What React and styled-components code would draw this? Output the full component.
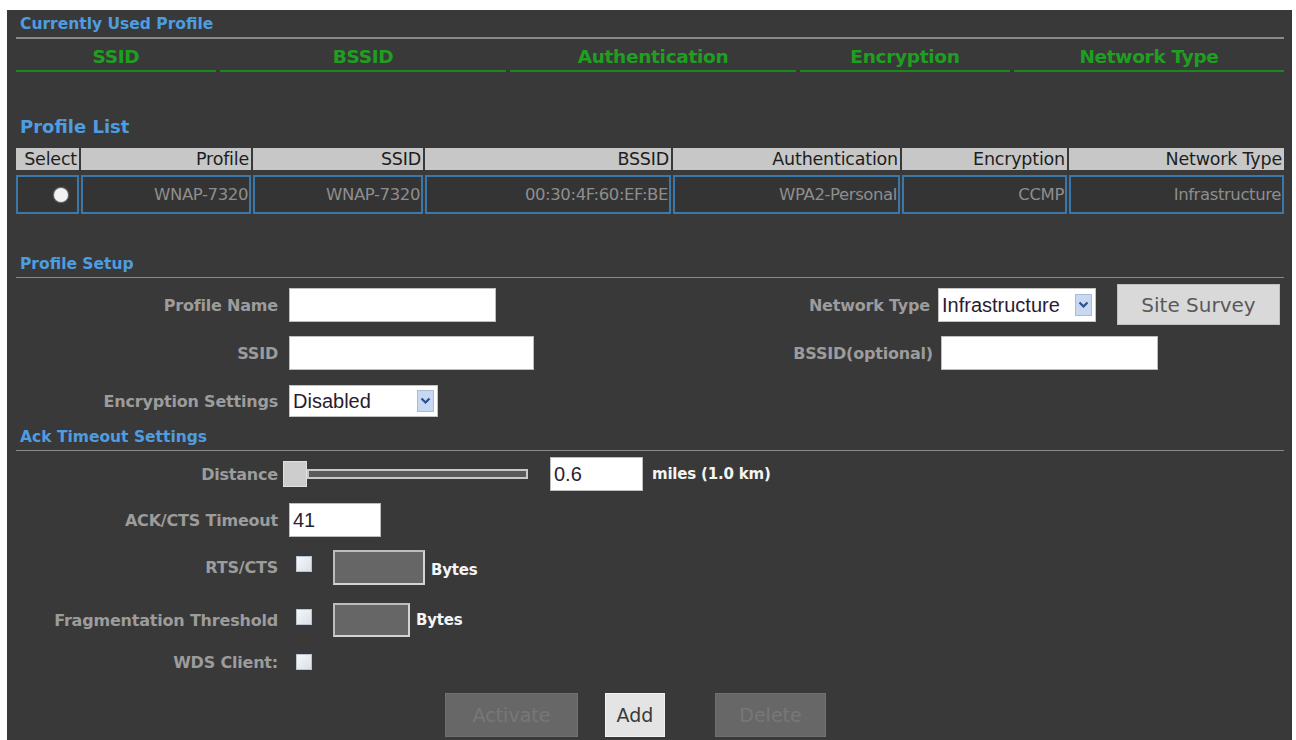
import React from "react";
import styled, { createGlobalStyle } from "styled-components";

const GlobalStyle = createGlobalStyle`
  html, body {
    margin: 0;
    padding: 0;
    background: #ffffff;
    overflow: hidden;
  }
`;

const Panel = styled.div`
  margin: 10px 4px 0 7px;
  min-height: 740px;
  padding: 0 8px 0 9px;
  background: #393939;
  font-family: "DejaVu Sans", sans-serif;
`;

const SectionTitle = styled.div`
  margin-top: ${(p) => p.$top || 0}px;
  padding: ${(p) => p.$padTop || 0}px 0 ${(p) => (p.$line ? 3 : 0)}px 4px;
  font-size: ${(p) => p.$size || 15.5}px;
  line-height: ${(p) => p.$lh || 20}px;
  font-weight: bold;
  color: #4d9de0;
  border-bottom: ${(p) => (p.$line ? `${p.$line}px solid #8a8a8a` : "none")};
`;

const CurrentGrid = styled.div`
  display: grid;
  grid-template-columns: 200px 286px 286px 210px 270px;
  column-gap: 4px;
`;

const CurrentHead = styled.div`
  padding: 6px 0 1px;
  line-height: 24px;
  font-size: 18.5px;
  font-weight: bold;
  text-align: center;
  color: #1f9f22;
  border-bottom: 2px solid #1c861f;
  letter-spacing: -0.3px;
`;

const ListTable = styled.div`
  margin-top: 10px;
  display: grid;
  grid-template-columns: 63px 170px 170px 246px 227px 165px 215px;
  grid-template-rows: 22px 39px;
  column-gap: 2px;
  row-gap: 5px;
`;

const HeadCell = styled.div`
  background: #c7c7c7;
  color: #1e1e1e;
  font-size: 17.5px;
  line-height: 22px;
  text-align: right;
  padding-right: 2px;
  white-space: nowrap;
  overflow: hidden;
  letter-spacing: -0.2px;
`;

const DataCell = styled.div`
  display: flex;
  align-items: center;
  justify-content: ${(p) => (p.$center ? "center" : "flex-end")};
  border: 2px solid #3b78a9;
  background: #343434;
  color: #8e8e8e;
  font-size: 16.5px;
  padding-right: ${(p) => (p.$center ? 0 : 1)}px;
  white-space: nowrap;
  overflow: hidden;
  letter-spacing: -0.4px;
`;

const Radio = styled.span`
  width: 14px;
  height: 14px;
  margin-left: 26px;
  border-radius: 50%;
  background: #f2f2f2;
  box-shadow: 0 0 1px 1px rgba(255, 255, 255, 0.3);
`;

const SetupArea = styled.div`
  margin-top: 10px;
  display: flex;
`;

const FormGrid = styled.div`
  display: grid;
  grid-template-columns: ${(p) => p.$label}px auto;
  grid-auto-rows: 34px;
  justify-content: start;
  row-gap: 14px;
  column-gap: ${(p) => p.$gap || 11}px;
  align-items: center;
  justify-items: start;
  width: ${(p) => p.$width}px;
`;

const FieldGroup = styled.div`
  display: flex;
  align-items: center;
`;

const Label = styled.label`
  justify-self: end;
  font-size: 16px;
  font-weight: bold;
  color: #9c9c9c;
  white-space: nowrap;
  letter-spacing: -0.2px;
  margin-right: ${(p) => p.$shift || 0}px;
`;

const TextInput = styled.div`
  box-sizing: border-box;
  width: ${(p) => p.$w}px;
  height: 34px;
  background: #ffffff;
  border: 1px solid #bdbdbd;
  font-family: "Liberation Sans", Arial, sans-serif;
  font-size: 20px;
  line-height: 32px;
  padding-left: 3px;
  color: #2a2230;
  margin-left: ${(p) => p.$shift || 0}px;
`;

const SelectBox = styled.div`
  box-sizing: border-box;
  width: ${(p) => p.$w}px;
  height: ${(p) => p.$h || 34}px;
  display: flex;
  align-items: center;
  justify-content: space-between;
  background: #ffffff;
  border: 1px solid #c4c4c4;
  padding: 0 3px 0 3px;
  font-family: "Liberation Sans", Arial, sans-serif;
  font-size: 20px;
  color: #2c1a33;
`;

const DropButton = styled.span`
  width: 17px;
  height: 22px;
  display: flex;
  align-items: center;
  justify-content: center;
  background: #c9d8f1;
  border: 1px solid #a9bcdc;
  box-sizing: border-box;
`;

const SurveyButton = styled.div`
  margin: -4px 0 -3px 21px;
  width: 163px;
  height: 41px;
  display: flex;
  align-items: center;
  justify-content: center;
  background: #d9d9d9;
  border: 1px solid #c0c0c0;
  box-sizing: border-box;
  font-size: 20px;
  color: #5a5a5a;
`;

const AckRow = styled.div`
  margin-top: ${(p) => p.$top}px;
  height: ${(p) => p.$h || 34}px;
  display: flex;
  align-items: center;
`;

const AckLabel = styled(Label)`
  width: 262px;
  text-align: right;
  margin-right: ${(p) => p.$gap ?? 11}px;
`;

const Slider = styled.div`
  display: flex;
  align-items: center;
  width: 245px;
`;

const Thumb = styled.span`
  width: 24px;
  height: 26px;
  background: #cdcdcd;
  border: 1px solid #e0e0e0;
  box-sizing: border-box;
`;

const Track = styled.span`
  flex: 1;
  height: 10px;
  background: #5a5a5a;
  border: 2px solid #c9c9c9;
  box-sizing: border-box;
`;

const Unit = styled.span`
  margin-left: ${(p) => p.$gap || 6}px;
  margin-top: ${(p) => (p.$low ? 4 : 0)}px;
  font-size: 15px;
  font-weight: bold;
  color: #f4f4f4;
  letter-spacing: -0.2px;
`;

const Check = styled.span`
  width: 16px;
  height: 16px;
  margin: 0 21px 0 7px;
  background: linear-gradient(135deg, #f6f8fa, #d8e0e8);
  border: 1px solid #b8c4d0;
  box-sizing: border-box;
  align-self: ${(p) => (p.$top ? "flex-start" : "center")};
  margin-top: ${(p) => (p.$top ? 6 : 0)}px;
`;

const GreyInput = styled.span`
  width: ${(p) => p.$w}px;
  height: 100%;
  box-sizing: border-box;
  background: #666666;
  border: 2px solid #d4d4d4;
  border-top-color: #bcbcbc;
  border-left-color: #bcbcbc;
`;

const ButtonRow = styled.div`
  margin-top: 19px;
  padding-left: 429px;
  display: flex;
`;

const ActionButton = styled.div`
  width: ${(p) => p.$w}px;
  height: 44px;
  margin-left: ${(p) => p.$gap || 0}px;
  display: flex;
  align-items: center;
  justify-content: center;
  box-sizing: border-box;
  background: ${(p) => (p.$enabled ? "#e4e4e4" : "#676767")};
  color: ${(p) => (p.$enabled ? "#3a3a3a" : "#777777")};
  border: 1px solid ${(p) => (p.$enabled ? "#f2f2f2" : "#707070")};
  font-size: 19px;
`;

const Chevron = () => (
  <svg width="11" height="8" viewBox="0 0 11 8">
    <path d="M1.5 1.5 L5.5 5.5 L9.5 1.5" fill="none" stroke="#2d4f8c" strokeWidth="2.2" />
  </svg>
);

const current = [
  "SSID",
  "BSSID",
  "Authentication",
  "Encryption",
  "Network Type",
];

const listHead = [
  "Select",
  "Profile",
  "SSID",
  "BSSID",
  "Authentication",
  "Encryption",
  "Network Type",
];

const listRow = [
  "WNAP-7320",
  "WNAP-7320",
  "00:30:4F:60:EF:BE",
  "WPA2-Personal",
  "CCMP",
  "Infrastructure",
];

export default function App() {
  return (
    <>
      <GlobalStyle />
      <Panel>
        <SectionTitle $padTop={4} $line={2}>
          Currently Used Profile
        </SectionTitle>
        <CurrentGrid>
          {current.map((c) => (
            <CurrentHead key={c}>{c}</CurrentHead>
          ))}
        </CurrentGrid>

        <SectionTitle $top={44} $size={18} $lh={22}>
          Profile List
        </SectionTitle>
        <ListTable>
          {listHead.map((h) => (
            <HeadCell key={h}>{h}</HeadCell>
          ))}
          <DataCell $center>
            <Radio />
          </DataCell>
          {listRow.map((v, i) => (
            <DataCell key={i}>{v}</DataCell>
          ))}
        </ListTable>

        <SectionTitle $top={40} $line={1}>
          Profile Setup
        </SectionTitle>
        <SetupArea>
          <FormGrid $label={262} $width={684}>
            <Label>Profile Name</Label>
            <TextInput $w={207} />
            <Label>SSID</Label>
            <TextInput $w={245} />
            <Label>Encryption Settings</Label>
            <SelectBox $w={149} $h={32}>
              Disabled
              <DropButton>
                <Chevron />
              </DropButton>
            </SelectBox>
          </FormGrid>
          <FormGrid $label={230} $gap={8} $width={584}>
            <Label>Network Type</Label>
            <FieldGroup>
              <SelectBox $w={158}>
                Infrastructure
                <DropButton>
                  <Chevron />
                </DropButton>
              </SelectBox>
              <SurveyButton>Site Survey</SurveyButton>
            </FieldGroup>
            <Label $shift={-3}>BSSID(optional)</Label>
            <TextInput $w={217} $shift={3} />
          </FormGrid>
        </SetupArea>

        <SectionTitle $top={9} $line={1}>
          Ack Timeout Settings
        </SectionTitle>
        <AckRow $top={6}>
          <AckLabel $gap={5}>Distance</AckLabel>
          <Slider>
            <Thumb />
            <Track />
          </Slider>
          <TextInput $w={93} $shift={22}>
            0.6
          </TextInput>
          <Unit $gap={9}>miles (1.0 km)</Unit>
        </AckRow>
        <AckRow $top={12}>
          <AckLabel>ACK/CTS Timeout</AckLabel>
          <TextInput $w={92}>41</TextInput>
        </AckRow>
        <AckRow $top={13} $h={35}>
          <AckLabel>RTS/CTS</AckLabel>
          <Check $top />
          <GreyInput $w={92} />
          <Unit $low>Bytes</Unit>
        </AckRow>
        <AckRow $top={18}>
          <AckLabel>Fragmentation Threshold</AckLabel>
          <Check $top />
          <GreyInput $w={77} />
          <Unit>Bytes</Unit>
        </AckRow>
        <AckRow $top={13} $h={24}>
          <AckLabel>WDS Client:</AckLabel>
          <Check />
        </AckRow>
        <ButtonRow>
          <ActionButton $w={133}>Activate</ActionButton>
          <ActionButton $w={60} $gap={27} $enabled>
            Add
          </ActionButton>
          <ActionButton $w={111} $gap={50}>
            Delete
          </ActionButton>
        </ButtonRow>
      </Panel>
    </>
  );
}
